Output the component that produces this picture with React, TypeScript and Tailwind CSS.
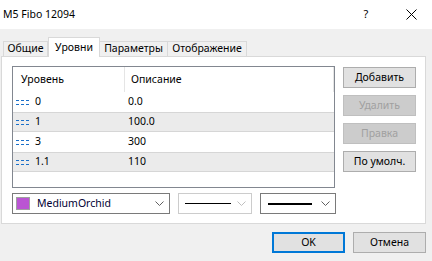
import React from "react";

const rows = [
  { level: "0", desc: "0.0", shade: false },
  { level: "1", desc: "100.0", shade: true },
  { level: "3", desc: "300", shade: false },
  { level: "1.1", desc: "110", shade: true },
];

function DashIcon() {
  return (
    <svg width="14" height="7" viewBox="0 0 14 7" className="shrink-0">
      <g fill="#1a6fc9">
        <rect x="0" y="1" width="3" height="1" />
        <rect x="5" y="1" width="3" height="1" />
        <rect x="10" y="1" width="3" height="1" />
        <rect x="0" y="5" width="3" height="1" />
        <rect x="5" y="5" width="3" height="1" />
        <rect x="10" y="5" width="3" height="1" />
      </g>
    </svg>
  );
}

function Chevron({ color }: { color: string }) {
  return (
    <svg width="9" height="5" viewBox="0 0 9 5" className="shrink-0">
      <path d="M0.5 0.5 L4.5 4.5 L8.5 0.5" fill="none" stroke={color} strokeWidth="1" />
    </svg>
  );
}

function SideButton({ label, disabled }: { label: string; disabled?: boolean }) {
  return (
    <div
      className={
        disabled
          ? "h-[21px] w-[73px] flex items-center justify-center border border-[#bfbfbf] bg-[#cccccc] text-[#a0a0a0]"
          : "h-[21px] w-[73px] flex items-center justify-center border border-[#adadad] bg-[#e1e1e1] text-black"
      }
    >
      {label}
    </div>
  );
}

export default function App() {
  return (
    <div
      className="w-[432px] h-[261px] bg-[#f0f0f0] flex flex-col text-[10.5px] text-black overflow-hidden"
      style={{ fontFamily: '"Noto Sans", "Open Sans", sans-serif' }}
    >
      {/* title bar */}
      <div className="h-[29px] bg-white flex items-center pl-[3px] shrink-0">
        <span className="text-[10.5px] leading-none">M5 Fibo 12094</span>
        <span className="ml-auto w-[20px] text-center text-[11px]">?</span>
        <span className="ml-[25px] mr-[11px] w-[20px] flex justify-center">
          <svg width="11" height="11" viewBox="0 0 11 11">
            <path d="M0.5 0.5 L10.5 10.5 M10.5 0.5 L0.5 10.5" stroke="#000" strokeWidth="1" />
          </svg>
        </span>
      </div>

      {/* tabs */}
      <div className="h-[27px] flex items-end pl-[3px] relative z-10 shrink-0">
        <div className="h-[15px] w-[45px] flex items-center justify-center border border-b-0 border-[#d9d9d9] bg-[#f0f0f0]">
          Общие
        </div>
        <div className="h-[20px] -mb-[1px] w-[52px] flex items-start pt-[2px] justify-center border border-b-0 border-[#d9d9d9] bg-white">
          Уровни
        </div>
        <div className="h-[15px] w-[68px] flex items-center justify-center border border-b-0 border-l-0 border-[#d9d9d9] bg-[#f0f0f0]">
          Параметры
        </div>
        <div className="h-[15px] w-[79px] flex items-center justify-center border border-b-0 border-l-0 border-[#d9d9d9] bg-[#f0f0f0]">
          Отображение
        </div>
      </div>

      {/* panel */}
      <div className="ml-[1px] w-[425px] h-[168px] bg-white border border-[#d9d9d9] pl-[10px] pt-[9px] flex flex-col shrink-0">
        <div className="flex">
          {/* list */}
          <div className="w-[323px] h-[122px] border border-[#828790] bg-white flex flex-col">
            <div className="h-[25px] flex">
              <div className="w-[112px] pl-[8px] flex items-center border-r border-[#e5e5e5]">Уровень</div>
              <div className="flex-1 pl-[6px] flex items-center border-r border-[#e5e5e5]">Описание</div>
            </div>
            {rows.map((r) => (
              <div
                key={r.level}
                className={
                  r.shade
                    ? "h-[20px] flex items-center bg-[#ebebeb] border-y border-[#d6d6d6]"
                    : "h-[20px] flex items-center bg-white"
                }
              >
                <div className="w-[112px] pl-[3px] flex items-center gap-[5px]">
                  <DashIcon />
                  <span>{r.level}</span>
                </div>
                <div className="pl-[3px]">{r.desc}</div>
              </div>
            ))}
          </div>

          {/* side buttons */}
          <div className="ml-[8px] pt-[1px] flex flex-col gap-[7px]">
            <SideButton label="Добавить" />
            <SideButton label="Удалить" disabled />
            <SideButton label="Правка" disabled />
            <SideButton label="По умолч." />
          </div>
        </div>

        {/* style combos */}
        <div className="mt-[5px] flex gap-[8px]">
          <div className="w-[158px] h-[21px] border border-[#7a7a7a] flex items-center pl-[3px] pr-[5px]">
            <div className="w-[14px] h-[13px] bg-[#ba55d3] border border-[#a0a0a0]" />
            <span className="ml-[7px] text-[#000033]">MediumOrchid</span>
            <span className="ml-auto"><Chevron color="#606060" /></span>
          </div>
          <div className="w-[74px] h-[21px] border border-[#cccccc] flex items-center pl-[6px] pr-[5px]">
            <div className="w-[46px] h-[1px] bg-black" />
            <span className="ml-auto"><Chevron color="#bfbfbf" /></span>
          </div>
          <div className="w-[76px] h-[21px] border border-[#7a7a7a] flex items-center pl-[7px] pr-[5px]">
            <div className="w-[44px] h-[2px] bg-black" />
            <span className="ml-auto"><Chevron color="#606060" /></span>
          </div>
        </div>
      </div>

      {/* footer */}
      <div className="mt-[8px] flex justify-end gap-[8px] pr-[6px]">
        <div className="w-[73px] h-[21px] border-2 border-[#0078d7] bg-[#e1e1e1] flex items-center justify-center">
          OK
        </div>
        <div className="w-[73px] h-[21px] border border-[#adadad] bg-[#e1e1e1] flex items-center justify-center">
          Отмена
        </div>
      </div>
    </div>
  );
}
